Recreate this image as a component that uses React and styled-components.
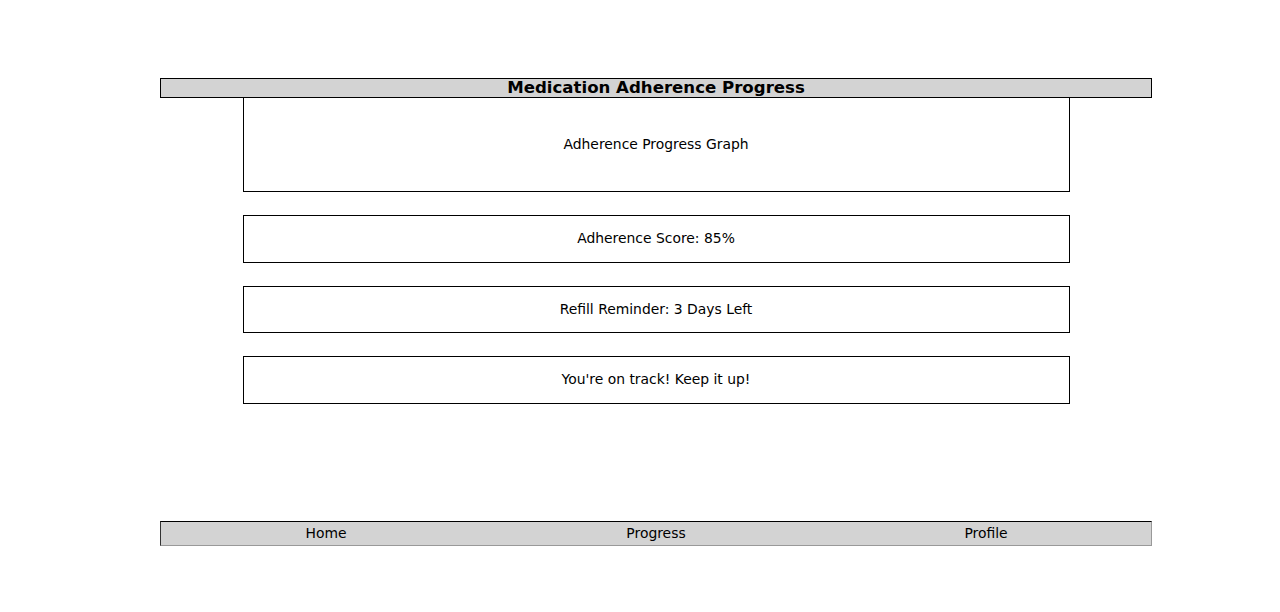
import styled, { createGlobalStyle } from "styled-components";

const GlobalStyle = createGlobalStyle`
  html, body {
    margin: 0;
    padding: 0;
    background: #ffffff;
  }
  body {
    font-family: "DejaVu Sans", "Liberation Sans", sans-serif;
    color: #000000;
  }
`;

const Screen = styled.div`
  padding-top: 78px;
  padding-left: 160px;
  width: 992px;
`;

const Header = styled.header`
  box-sizing: border-box;
  height: 20px;
  background: #d3d3d3;
  border: 1px solid #000000;
  display: flex;
  align-items: center;
  justify-content: center;
`;

const Title = styled.h1`
  margin: 0;
  font-size: 16.6px;
  font-weight: bold;
  line-height: 18px;
`;

const Main = styled.main`
  height: 423px;
  display: flex;
  flex-direction: column;
  align-items: center;
  gap: 23px;
  margin-top: -1px;
`;

const Card = styled.div`
  box-sizing: border-box;
  width: 827px;
  height: ${(props) => (props.tall ? "95px" : "47.5px")};
  border: 1px solid #000000;
  display: flex;
  align-items: center;
  justify-content: center;
  font-size: 13.9px;
  line-height: 16px;
  padding-bottom: 1px;
`;

const NavBar = styled.nav`
  box-sizing: border-box;
  height: 25px;
  background: #d3d3d3;
  border-top: 1px solid #000000;
  border-left: 1px solid #333333;
  border-right: 1px solid #999999;
  border-bottom: 1px solid #999999;
  margin-top: 1px;
  display: grid;
  grid-template-columns: repeat(3, 1fr);
  align-items: center;
`;

const NavItem = styled.span`
  text-align: center;
  font-size: 13.9px;
  line-height: 20px;
  padding-bottom: 2px;
`;

export default function App() {
  return (
    <>
      <GlobalStyle />
      <Screen>
        <Header>
          <Title>Medication Adherence Progress</Title>
        </Header>
        <Main>
          <Card tall>Adherence Progress Graph</Card>
          <Card>Adherence Score: 85%</Card>
          <Card>Refill Reminder: 3 Days Left</Card>
          <Card>You're on track! Keep it up!</Card>
        </Main>
        <NavBar>
          <NavItem>Home</NavItem>
          <NavItem>Progress</NavItem>
          <NavItem>Profile</NavItem>
        </NavBar>
      </Screen>
    </>
  );
}
